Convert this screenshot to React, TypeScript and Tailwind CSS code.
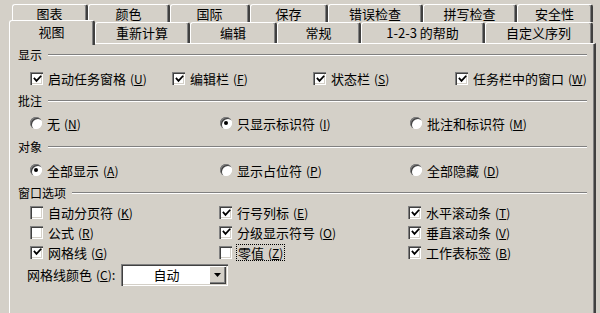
import React from "react";

const FONT = { fontFamily: '"Noto Sans CJK SC", "Noto Sans", sans-serif' };

function Acc({ k }: { k: string }) {
  return (
    <span className="ml-[4px] text-[12px]">
      (<span className="underline underline-offset-[1px]">{k}</span>)
    </span>
  );
}

function CheckBox({ checked }: { checked: boolean }) {
  return (
    <span className="relative inline-flex w-[13px] h-[13px] shrink-0 bg-white items-center justify-center shadow-[inset_1px_1px_0_#808080,inset_2px_2px_0_#404040,inset_-1px_-1px_0_#ffffff,inset_-2px_-2px_0_#d4d0c8]">
      {checked && (
        <svg width="9" height="9" viewBox="0 0 9 9" className="ml-[1px] mt-[1px]">
          <path d="M1.5 3.5 L3.5 5.8 L7.6 1.4" fill="none" stroke="#000" strokeWidth="1.8" strokeLinecap="square" />
        </svg>
      )}
    </span>
  );
}

function Radio({ checked }: { checked: boolean }) {
  return (
    <span className="relative inline-flex w-[12px] h-[12px] shrink-0 rounded-full bg-white items-center justify-center shadow-[inset_1px_1px_0_#808080,inset_2px_2px_0_#404040,inset_-1px_-1px_0_#ffffff]">
      {checked && <span className="w-[4px] h-[4px] rounded-full bg-black" />}
    </span>
  );
}

function Item({
  w,
  kind,
  checked,
  label,
  k,
  focus,
}: {
  w: string;
  kind: "c" | "r";
  checked: boolean;
  label: string;
  k: string;
  focus?: boolean;
}) {
  return (
    <div className={`flex items-center shrink-0 ${w}`}>
      {kind === "c" ? <CheckBox checked={checked} /> : <Radio checked={checked} />}
      <span
        className={`ml-[5px] text-[13px] leading-[15px] text-black whitespace-nowrap ${
          focus ? "outline outline-1 outline-dotted outline-black px-[1px]" : ""
        }`}
      >
        {label}
        <Acc k={k} />
      </span>
    </div>
  );
}

function Header({ text, h }: { text: string; h: string }) {
  return (
    <div className={`flex items-center pl-[8px] pr-[7px] ${h}`}>
      <span className="text-[12px] leading-[14px] text-black">{text}</span>
      <div className="flex-1 ml-[6px] border-t border-t-[#808080] border-b border-b-white" />
    </div>
  );
}

function Tab({ label, w, h }: { label: string; w: string; h: string }) {
  return (
    <div
      className={`${w} ${h} shrink-0 flex items-center justify-center text-[13px] text-black border-t border-l border-white border-r-2 border-r-[#404040] rounded-t-[3px] bg-[#d4d0c8] shadow-[inset_-1px_0_0_#808080]`}
    >
      {label}
    </div>
  );
}

export default function App() {
  return (
    <div className="w-[600px] h-[313px] overflow-hidden bg-[#d4d0c8] text-black" style={FONT}>
      {/* back row of tabs */}
      <div className="flex ml-[12px] pt-[4px]">
        <Tab label="图表" w="w-[76px]" h="h-[18px]" />
        <Tab label="颜色" w="w-[82px]" h="h-[18px]" />
        <Tab label="国际" w="w-[80px]" h="h-[18px]" />
        <Tab label="保存" w="w-[78px]" h="h-[18px]" />
        <Tab label="错误检查" w="w-[95px]" h="h-[18px]" />
        <Tab label="拼写检查" w="w-[94px]" h="h-[18px]" />
        <Tab label="安全性" w="w-[76px]" h="h-[18px]" />
      </div>
      {/* front row of tabs */}
      <div className="flex ml-[12px] h-[21px] relative z-10">
        <div className="relative -ml-[3px] -mt-[2px] w-[86px] h-[25px] shrink-0 flex items-center justify-center text-[13px] border-t border-l border-white border-r-2 border-r-[#404040] rounded-t-[3px] bg-[#d4d0c8] shadow-[inset_-1px_0_0_#808080] pb-[2px]">
          视图
        </div>
        <Tab label="重新计算" w="w-[95px]" h="h-[21px]" />
        <Tab label="编辑" w="w-[87px]" h="h-[21px]" />
        <Tab label="常规" w="w-[84px]" h="h-[21px]" />
        <Tab label="1-2-3 的帮助" w="w-[124px]" h="h-[21px]" />
        <Tab label="自定义序列" w="w-[108px]" h="h-[21px]" />
      </div>
      {/* panel */}
      <div className="ml-[9px] w-[587px] h-[280px] border-t border-l border-white border-r-2 border-r-[#404040] shadow-[inset_-1px_0_0_#808080] pt-[1px]">
        <Header text="显示" h="h-[20px]" />
        <div className="flex items-center pl-[20px] h-[27px]">
          <Item w="w-[142px]" kind="c" checked label="启动任务窗格" k="U" />
          <Item w="w-[141px]" kind="c" checked label="编辑栏" k="F" />
          <Item w="w-[142px]" kind="c" checked label="状态栏" k="S" />
          <Item w="w-[130px]" kind="c" checked label="任务栏中的窗口" k="W" />
        </div>
        <Header text="批注" h="h-[18px]" />
        <div className="flex items-center pl-[20px] h-[26px]">
          <Item w="w-[190px]" kind="r" checked={false} label="无" k="N" />
          <Item w="w-[190px]" kind="r" checked label="只显示标识符" k="I" />
          <Item w="w-[160px]" kind="r" checked={false} label="批注和标识符" k="M" />
        </div>
        <Header text="对象" h="h-[21px]" />
        <div className="flex items-center pl-[20px] h-[26px]">
          <Item w="w-[190px]" kind="r" checked label="全部显示" k="A" />
          <Item w="w-[190px]" kind="r" checked={false} label="显示占位符" k="P" />
          <Item w="w-[160px]" kind="r" checked={false} label="全部隐藏" k="D" />
        </div>
        <Header text="窗口选项" h="h-[20px]" />
        <div className="flex items-center pl-[20px] h-[19px]">
          <Item w="w-[189px]" kind="c" checked={false} label="自动分页符" k="K" />
          <Item w="w-[189px]" kind="c" checked label="行号列标" k="E" />
          <Item w="w-[160px]" kind="c" checked label="水平滚动条" k="T" />
        </div>
        <div className="flex items-center pl-[20px] h-[20px]">
          <Item w="w-[189px]" kind="c" checked={false} label="公式" k="R" />
          <Item w="w-[189px]" kind="c" checked label="分级显示符号" k="O" />
          <Item w="w-[160px]" kind="c" checked label="垂直滚动条" k="V" />
        </div>
        <div className="flex items-center pl-[20px] h-[20px]">
          <Item w="w-[189px]" kind="c" checked label="网格线" k="G" />
          <Item w="w-[189px]" kind="c" checked={false} label="零值" k="Z" focus />
          <Item w="w-[160px]" kind="c" checked label="工作表标签" k="B" />
        </div>
        <div className="flex items-center pl-[17px] mt-[2px] h-[22px]">
          <span className="text-[13px] whitespace-nowrap">
            网格线颜色
            <Acc k="C" />:
          </span>
          <div className="ml-[6px] w-[107px] h-[22px] flex bg-white shadow-[inset_1px_1px_0_#808080,inset_2px_2px_0_#404040,inset_-1px_-1px_0_#ffffff,inset_-2px_-2px_0_#d4d0c8] p-[2px]">
            <div className="flex-1 flex items-center justify-center text-[13px]">自动</div>
            <div className="w-[17px] h-full bg-[#d4d0c8] flex items-center justify-center shadow-[inset_1px_1px_0_#ffffff,inset_-1px_-1px_0_#404040,inset_-2px_-2px_0_#808080]">
              <svg width="7" height="4" viewBox="0 0 7 4">
                <path d="M0 0 H7 L3.5 4 Z" fill="#000" />
              </svg>
            </div>
          </div>
        </div>
      </div>
    </div>
  );
}
